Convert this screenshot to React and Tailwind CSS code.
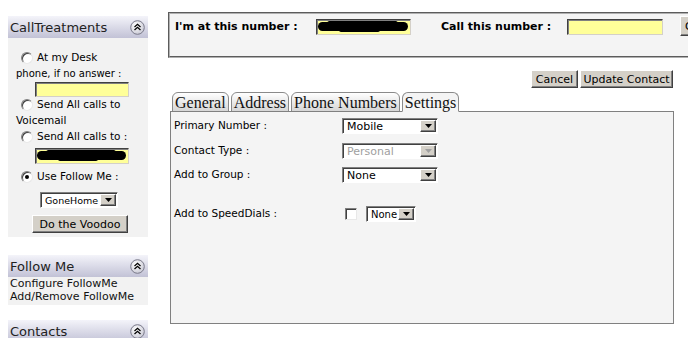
import React from 'react';

const sans = { fontFamily: '"DejaVu Sans", Verdana, sans-serif' };

function CollapseIcon() {
    return (
        <svg width="15" height="15" viewBox="0 0 15 15">
            <defs>
                <radialGradient id="cg" cx="40%" cy="35%" r="70%">
                    <stop offset="0%" stopColor="#ffffff" />
                    <stop offset="100%" stopColor="#c8c8d4" />
                </radialGradient>
            </defs>
            <circle cx="7.5" cy="7.5" r="6.8" fill="url(#cg)" stroke="#7a7a8a" strokeWidth="1" />
            <path d="M4.5 7 L7.5 4.3 L10.5 7" fill="none" stroke="#000" strokeWidth="1.3" />
            <path d="M4.5 10 L7.5 7.3 L10.5 10" fill="none" stroke="#000" strokeWidth="1.3" />
        </svg>
    );
}

function PanelHeader({ title }) {
    return (
        <div className="h-[22px] shrink-0 flex items-center justify-between pl-[2px] pr-[3px] bg-gradient-to-b from-[#f4f4fa] to-[#c2c2d6]">
            <span className="text-[13px] text-[#222] leading-none">{title}</span>
            <CollapseIcon />
        </div>
    );
}

function Radio({ checked }) {
    return (
        <span className="relative inline-block w-[12px] h-[12px] rounded-full bg-white border border-t-[#808080] border-l-[#808080] border-b-[#e8e8e8] border-r-[#e8e8e8] shadow-[inset_1px_1px_0_#404040] shrink-0">
            {checked && <span className="absolute left-[3px] top-[3px] w-[4px] h-[4px] rounded-full bg-black" />}
        </span>
    );
}

function Field({ className, scribble }) {
    return (
        <div className={'relative shrink-0 bg-[#ffff99] border border-t-[#404040] border-l-[#404040] border-b-[#d4d0c8] border-r-[#d4d0c8] shadow-[inset_1px_1px_0_#808080] overflow-hidden ' + className}>
            {scribble && (
                <>
                    <div className="absolute left-[1px] right-[2px] top-[2px] h-[9px] rounded-full bg-black" />
                    <div className="absolute left-[10px] right-[12px] top-[1px] h-[5px] rounded-full bg-black" />
                    <div className="absolute left-[22px] right-[30px] top-[8px] h-[4px] rounded-full bg-black" />
                </>
            )}
        </div>
    );
}

function DropButton({ disabled }) {
    return (
        <div className="w-[16px] shrink-0 h-full bg-[#d4d0c8] border border-t-white border-l-white border-b-[#404040] border-r-[#404040] shadow-[inset_-1px_-1px_0_#808080] flex items-center justify-center">
            <svg width="7" height="4" viewBox="0 0 7 4">
                <path d="M0 0 H7 L3.5 4 Z" fill={disabled ? '#a0a0a0' : '#000'} />
            </svg>
        </div>
    );
}

function Select({ value, width, disabled, size }) {
    return (
        <div
            className="h-[16px] shrink-0 flex items-stretch bg-white border border-t-[#808080] border-l-[#808080] border-b-white border-r-white shadow-[inset_1px_1px_0_#404040] pl-[3px] pr-[1px] py-[1px]"
            style={{ width }}
        >
            <span
                className={
                    'flex-1 whitespace-nowrap overflow-hidden leading-[13px] pl-[1px] ' +
                    (disabled ? 'text-[#a0a0a0]' : 'text-black')
                }
                style={{ fontSize: size || 11 }}
            >
                {value}
            </span>
            <DropButton disabled={disabled} />
        </div>
    );
}

function Button({ children, className }) {
    return (
        <button className={'h-[18px] shrink-0 whitespace-nowrap bg-[#d4d0c8] border border-t-white border-l-white border-b-[#404040] border-r-[#404040] shadow-[inset_-1px_-1px_0_#808080] text-[11px] leading-none text-black px-0 ' + (className || '')}>
            {children}
        </button>
    );
}

function Tab({ label, active }) {
    return (
        <div
            className={
                'h-[20px] px-[2px] rounded-t-[6px] border border-[#8a8a8a] text-[16px] leading-[19px] text-[#111] ' +
                (active ? 'bg-[#f4f4f4] border-b-[#f4f4f4] relative z-10' : 'bg-gradient-to-b from-white to-[#d6d6d6]')
            }
            style={{ fontFamily: '"Liberation Serif", "Times New Roman", serif' }}
        >
            {label}
        </div>
    );
}

function Sidebar() {
    return (
        <div className="w-[140px] ml-[8px] mt-[16px] self-start flex flex-col shrink-0 text-[10px] text-black">
            <PanelHeader title="CallTreatments" />
            <div className="bg-[#f2f2f2] pt-[12px] pb-[4px] flex flex-col shrink-0">
                <div className="h-[16px] flex items-center gap-[4px] pl-[13px]">
                    <Radio />
                    <span className="text-[10.5px]">At my Desk</span>
                </div>
                <div className="h-[14px] flex items-center pl-[8px] text-[10px]">phone, if no answer :</div>
                <Field className="ml-[27px] mt-[2px] w-[94px] h-[15px]" />
                <div className="h-[16px] flex items-center gap-[4px] pl-[13px]">
                    <Radio />
                    <span className="text-[10.5px]">Send All calls to</span>
                </div>
                <div className="h-[16px] flex items-center pl-[8px] text-[10.5px]">Voicemail</div>
                <div className="h-[16px] flex items-center gap-[4px] pl-[13px]">
                    <Radio />
                    <span className="text-[10.5px]">Send All calls to :</span>
                </div>
                <Field className="ml-[27px] mt-[3px] w-[94px] h-[16px]" scribble />
                <div className="h-[16px] mt-[5px] flex items-center gap-[4px] pl-[13px]">
                    <Radio checked />
                    <span className="text-[10.5px]">Use Follow Me :</span>
                </div>
                <div className="ml-[32px] mt-[7px]">
                    <Select value="GoneHome" width={78} size={9.5} />
                </div>
                <Button className="ml-[24px] mt-[7px] w-[96px] text-[11px]">Do the Voodoo</Button>
            </div>

            <div className="mt-[18px] shrink-0">
                <PanelHeader title="Follow Me" />
                <div className="bg-[#f2f2f2] pl-[2px] pt-0 pb-[2px] text-[11px] leading-[13px] text-[#111]">
                    <div>Configure FollowMe</div>
                    <div>Add/Remove FollowMe</div>
                </div>
            </div>

            <div className="mt-[15px] shrink-0">
                <PanelHeader title="Contacts" />
            </div>
        </div>
    );
}

function SettingsRow({ label, children, className }) {
    return (
        <div className={'flex items-center h-[16px] shrink-0 ' + (className || '')}>
            <span className="w-[168px] text-[10.5px] text-black">{label}</span>
            {children}
        </div>
    );
}

export default function App() {
    return (
        <div className="w-[688px] h-[338px] overflow-hidden bg-white flex items-start" style={sans}>
            <Sidebar />
            <div className="ml-[20px] mt-[12px] flex flex-col w-[506px] shrink-0">
                <div className="w-[540px] h-[46px] shrink-0 bg-[#f4f4f4] border-2 border-[#b0b0b0] [border-style:groove] pt-[5px] pl-[5px] flex items-start">
                    <div className="h-[16px] flex items-center">
                        <span className="w-[141px] shrink-0 font-bold text-[11px] text-black">I'm at this number :</span>
                        <Field className="w-[95px] h-[16px]" scribble />
                        <span className="ml-[30px] w-[126px] shrink-0 font-bold text-[11px] text-black">Call this number :</span>
                        <Field className="w-[96px] h-[16px]" />
                        <Button className="ml-[17px] w-[40px] -mt-[2px] h-[20px] text-left pl-[4px]">Call</Button>
                    </div>
                </div>

                <div className="mt-[12px] flex justify-end pr-[1px] gap-[2px]">
                    <Button className="w-[47px]">Cancel</Button>
                    <Button className="w-[93px]">Update Contact</Button>
                </div>

                <div className="mt-[4px] ml-[4px] flex gap-[2px] items-end">
                    <Tab label="General" />
                    <Tab label="Address" />
                    <Tab label="Phone Numbers" />
                    <Tab label="Settings" active />
                </div>
                <div className="ml-[2px] -mt-[1px] w-[504px] h-[213px] bg-[#f4f4f4] border border-[#808080] pl-[3px] pt-[6px] flex flex-col">
                    <SettingsRow label="Primary Number :">
                        <Select value="Mobile" width={96} />
                    </SettingsRow>
                    <SettingsRow label="Contact Type :" className="mt-[9px]">
                        <Select value="Personal" width={96} disabled />
                    </SettingsRow>
                    <SettingsRow label="Add to Group :" className="mt-[8px]">
                        <Select value="None" width={96} />
                    </SettingsRow>
                    <SettingsRow label="Add to SpeedDials :" className="mt-[23px]">
                        <span className="ml-[3px] w-[12px] h-[12px] shrink-0 bg-white border border-t-[#808080] border-l-[#808080] border-b-[#e8e8e8] border-r-[#e8e8e8] shadow-[inset_1px_1px_0_#404040]" />
                        <span className="ml-[9px]">
                            <Select value="None" width={50} size={10} />
                        </span>
                    </SettingsRow>
                </div>
            </div>
        </div>
    );
}
